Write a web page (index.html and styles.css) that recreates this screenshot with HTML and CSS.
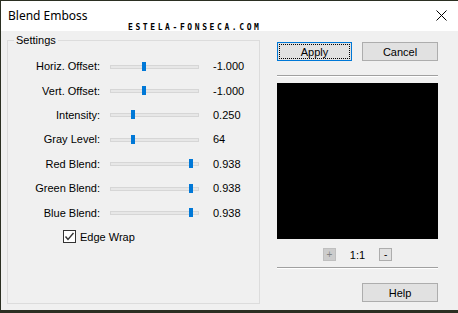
FILE: index.html
```html
<!DOCTYPE html>
<html lang="en">
<head>
    <meta charset="UTF-8">
    <title>Blend Emboss</title>
    <link rel="stylesheet" href="styles.css">
</head>
<body>
    <div class="window">
        <div class="titlebar">
            <span class="title">Blend Emboss</span>
            <span class="watermark">ESTELA-FONSECA.COM</span>
            <span class="close">
                <svg width="11" height="11" viewBox="0 0 11 11">
                    <path d="M0.5 0.5 L10.5 10.5 M10.5 0.5 L0.5 10.5" stroke="#000" stroke-width="1" fill="none"/>
                </svg>
            </span>
        </div>

        <div class="dialog-body">
            <fieldset class="settings">
                <legend>Settings</legend>
                <div class="param-grid">
                    <span class="label">Horiz. Offset:</span>
                    <div class="slider"><div class="track"></div><div class="thumb" style="left: 32px"></div></div>
                    <span class="value">-1.000</span>

                    <span class="label">Vert. Offset:</span>
                    <div class="slider"><div class="track"></div><div class="thumb" style="left: 32px"></div></div>
                    <span class="value">-1.000</span>

                    <span class="label">Intensity:</span>
                    <div class="slider"><div class="track"></div><div class="thumb" style="left: 21px"></div></div>
                    <span class="value">0.250</span>

                    <span class="label">Gray Level:</span>
                    <div class="slider"><div class="track"></div><div class="thumb" style="left: 21px"></div></div>
                    <span class="value">64</span>

                    <span class="label">Red Blend:</span>
                    <div class="slider"><div class="track"></div><div class="thumb" style="left: 79px"></div></div>
                    <span class="value">0.938</span>

                    <span class="label">Green Blend:</span>
                    <div class="slider"><div class="track"></div><div class="thumb" style="left: 79px"></div></div>
                    <span class="value">0.938</span>

                    <span class="label">Blue Blend:</span>
                    <div class="slider"><div class="track"></div><div class="thumb" style="left: 79px"></div></div>
                    <span class="value">0.938</span>

                    <label class="check-row">
                        <span class="checkbox">
                            <svg width="11" height="11" viewBox="0 0 11 11">
                                <path d="M1.5 5.5 L4 8.5 L9.5 2" stroke="#333" stroke-width="1.4" fill="none"/>
                            </svg>
                        </span>
                        Edge Wrap
                    </label>
                </div>
            </fieldset>

            <div class="side">
                <div class="button-row">
                    <button class="btn btn-focus"><span>Apply</span></button>
                    <button class="btn">Cancel</button>
                </div>
                <div class="separator sep-top"></div>
                <div class="preview"></div>
                <div class="zoom-row">
                    <button class="mini-btn mini-disabled">+</button>
                    <span class="zoom-label">1:1</span>
                    <button class="mini-btn">-</button>
                </div>
                <div class="separator sep-bottom"></div>
                <div class="help-row">
                    <button class="btn">Help</button>
                </div>
            </div>
        </div>
    </div>
</body>
</html>
```

FILE: styles.css
```css
* {
    margin: 0;
    padding: 0;
    box-sizing: border-box;
}

body {
    background: #2b2f22;
    width: 458px;
    height: 313px;
    overflow: hidden;
    font-family: 'Liberation Sans', Arial, sans-serif;
    font-size: 11px;
    color: #000;
}

.window {
    margin: 1px 0 0 1px;
    width: 457px;
    height: 309px;
    background: #f0f0f0;
    display: flex;
    flex-direction: column;
}

/* title bar */
.titlebar {
    position: relative;
    height: 30px;
    background: #fff;
    display: flex;
    align-items: center;
    padding-left: 7px;
}

.title {
    font-family: 'Noto Sans', sans-serif;
    font-size: 12px;
    margin-top: -2px;
}

.watermark {
    position: absolute;
    left: 127px;
    top: 22px;
    font-family: 'DejaVu Sans Mono', monospace;
    font-weight: bold;
    font-size: 8px;
    line-height: 9px;
    letter-spacing: 2.6px;
    color: #000;
}

.close {
    margin-left: auto;
    margin-right: 11px;
    display: flex;
    margin-top: -1px;
}

/* body */
.dialog-body {
    flex: 1;
    display: flex;
    padding: 3px 20px 0 6px;
}

.settings {
    width: 253px;
    height: 270px;
    border: 1px solid #dcdcdc;
    padding: 8px 0 0 0;
}

.settings legend {
    margin-left: 6px;
    padding: 0 2px;
    line-height: 12px;
}

.param-grid {
    display: grid;
    grid-template-columns: 92px 89px 1fr;
    grid-auto-rows: 24.4px;
    column-gap: 10px;
    align-items: center;
}

.param-grid .value {
    padding-left: 4px;
}

.label {
    text-align: right;
}

.slider {
    position: relative;
    height: 11px;
}

.track {
    position: absolute;
    left: 0;
    right: 0;
    top: 4px;
    height: 4px;
    background: #e7e7e7;
    border: 1px solid #d6d6d6;
}

.thumb {
    position: absolute;
    top: 1px;
    width: 4px;
    height: 9px;
    background: #0078d7;
}

.check-row {
    grid-column: 1 / 4;
    display: flex;
    align-items: center;
    gap: 4px;
    padding-left: 55px;
}

.checkbox {
    width: 13px;
    height: 13px;
    border: 1px solid #333;
    background: #fff;
    display: flex;
}

/* right column */
.side {
    width: 161px;
    margin-left: 17px;
    padding-top: 8px;
    display: flex;
    flex-direction: column;
}

.button-row {
    display: flex;
    justify-content: space-between;
}

.btn {
    width: 76px;
    height: 19px;
    background: #e1e1e1;
    border: 1px solid #adadad;
    font-family: 'Liberation Sans', Arial, sans-serif;
    font-size: 11px;
    color: #000;
}

.btn-focus {
    width: 75px;
    border-color: #0078d7;
    padding: 1px;
}

.btn-focus span {
    display: flex;
    align-items: center;
    justify-content: center;
    height: 100%;
    border: 1px dotted #000;
}

.separator {
    height: 2px;
    border-top: 1px solid #a0a0a0;
    border-bottom: 1px solid #fff;
}

.sep-top {
    margin-top: 14px;
}

.preview {
    margin-top: 6px;
    height: 156px;
    background: #000;
}

.zoom-row {
    margin-top: 9px;
    height: 13px;
    display: flex;
    justify-content: center;
    align-items: center;
    gap: 14px;
}

.mini-btn {
    width: 13px;
    height: 13px;
    background: #e1e1e1;
    border: 1px solid #adadad;
    font-family: 'Liberation Sans', Arial, sans-serif;
    font-size: 10px;
    line-height: 10px;
    color: #000;
}

.mini-disabled {
    background: #cccccc;
    border-color: #bfbfbf;
    color: #838383;
}

.zoom-label {
    font-size: 11px;
    color: #000;
}

.sep-bottom {
    margin-top: 6px;
}

.help-row {
    margin-top: 14px;
    display: flex;
    justify-content: flex-end;
}
```
